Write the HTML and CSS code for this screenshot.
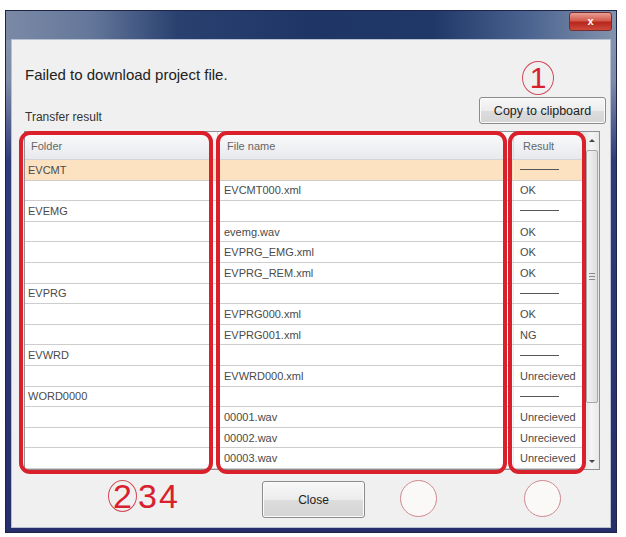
FILE: index.html
```html
<!DOCTYPE html>
<html lang="en">
<head>
    <meta charset="UTF-8">
    <title>Transfer result</title>
    <link rel="stylesheet" href="styles.css">
</head>
<body>
    <div class="window">
        <div class="titlebar">
            <span class="close-btn">x</span>
        </div>
        <div class="client">
            <div class="top">
                <div class="top-left">
                    <p class="message">Failed to download project file.</p>
                    <p class="caption">Transfer result</p>
                </div>
                <button class="btn btn-copy">Copy to clipboard</button>
            </div>

            <div class="grid">
                <div class="grid-main">
                    <div class="row head">
                        <div class="cell">Folder</div>
                        <div class="cell">File name</div>
                        <div class="cell">Result</div>
                    </div>
                    <div class="row selected">
                        <div class="cell">EVCMT</div><div class="cell"></div><div class="cell"><span class="dash"></span></div>
                    </div>
                    <div class="row">
                        <div class="cell"></div><div class="cell">EVCMT000.xml</div><div class="cell">OK</div>
                    </div>
                    <div class="row">
                        <div class="cell">EVEMG</div><div class="cell"></div><div class="cell"><span class="dash"></span></div>
                    </div>
                    <div class="row">
                        <div class="cell"></div><div class="cell">evemg.wav</div><div class="cell">OK</div>
                    </div>
                    <div class="row">
                        <div class="cell"></div><div class="cell">EVPRG_EMG.xml</div><div class="cell">OK</div>
                    </div>
                    <div class="row">
                        <div class="cell"></div><div class="cell">EVPRG_REM.xml</div><div class="cell">OK</div>
                    </div>
                    <div class="row">
                        <div class="cell">EVPRG</div><div class="cell"></div><div class="cell"><span class="dash"></span></div>
                    </div>
                    <div class="row">
                        <div class="cell"></div><div class="cell">EVPRG000.xml</div><div class="cell">OK</div>
                    </div>
                    <div class="row">
                        <div class="cell"></div><div class="cell">EVPRG001.xml</div><div class="cell">NG</div>
                    </div>
                    <div class="row">
                        <div class="cell">EVWRD</div><div class="cell"></div><div class="cell"><span class="dash"></span></div>
                    </div>
                    <div class="row">
                        <div class="cell"></div><div class="cell">EVWRD000.xml</div><div class="cell">Unrecieved</div>
                    </div>
                    <div class="row">
                        <div class="cell">WORD0000</div><div class="cell"></div><div class="cell"><span class="dash"></span></div>
                    </div>
                    <div class="row">
                        <div class="cell"></div><div class="cell">00001.wav</div><div class="cell">Unrecieved</div>
                    </div>
                    <div class="row">
                        <div class="cell"></div><div class="cell">00002.wav</div><div class="cell">Unrecieved</div>
                    </div>
                    <div class="row">
                        <div class="cell"></div><div class="cell">00003.wav</div><div class="cell">Unrecieved</div>
                    </div>
                </div>
                <div class="scrollbar">
                    <div class="sb-arrow sb-up"></div>
                    <div class="sb-track">
                        <div class="sb-thumb"><span class="grip"></span></div>
                    </div>
                    <div class="sb-arrow sb-down"></div>
                </div>
            </div>

            <div class="bottom">
                <button class="btn btn-close">Close</button>
            </div>

            <!-- red annotations -->
            <div class="mark mark-folder"></div>
            <div class="mark mark-file"></div>
            <div class="mark mark-result"></div>
            <span class="ring ring-1">1</span>
            <span class="ring ring-2">2</span>
            <span class="num num-3">3</span>
            <span class="num num-4">4</span>
            <span class="ring ring-empty ring-a"></span>
            <span class="ring ring-empty ring-b"></span>
        </div>
    </div>
</body>
</html>
```

FILE: styles.css
```css
* {
    margin: 0;
    padding: 0;
    box-sizing: border-box;
}

body {
    font-family: "Liberation Sans", Arial, sans-serif;
    background-color: #fff;
    color: #333;
}

.window {
    width: 612px;
    height: 523px;
    margin: 10px 0 0 5px;
    border: 1px solid #1e2448;
    display: flex;
    flex-direction: column;
    background: linear-gradient(180deg, #8a97b2 0px, #7d8ba8 70px, #2e3b7a 150px, #262f6c 100%);
}

.titlebar {
    height: 29px;
    position: relative;
    background: linear-gradient(90deg, #7b89a6 0%, #64779a 14%, #2a4170 28%, #1e3566 50%, #203868 70%, #4c6490 86%, #8393ad 100%);
}

.close-btn {
    position: absolute;
    right: 4px;
    top: 1px;
    width: 43px;
    height: 19px;
    border: 1px solid #7a2a2a;
    border-radius: 3px;
    background: linear-gradient(180deg, #e8a096 0%, #d4594c 45%, #b8271c 55%, #cc4a3c 100%);
    color: #fff;
    font-size: 11px;
    font-weight: bold;
    text-align: center;
    line-height: 16px;
}

.client {
    flex: 1;
    margin: 0 6px 5px 6px;
    background-color: #f0f0f0;
    box-shadow: 0 0 0 1px #b8c0d2;
    position: relative;
    display: flex;
    flex-direction: column;
}

.top {
    height: 91px;
    display: flex;
    justify-content: space-between;
    align-items: flex-end;
    padding: 0 4px 7px 13px;
}

.message {
    font-size: 15px;
    line-height: 18px;
    color: #222;
    margin-bottom: 26px;
}

.caption {
    font-size: 12px;
    line-height: 14px;
    color: #333;
}

.btn {
    font-family: "Liberation Sans", Arial, sans-serif;
    color: #222;
    border: 1px solid #8c8c8c;
    border-radius: 3px;
    background: linear-gradient(180deg, #f8f8f8 0%, #ececec 50%, #dddddd 51%, #d4d4d4 100%);
    box-shadow: inset 0 0 0 1px #fbfbfb;
}

.btn-copy {
    width: 127px;
    height: 27px;
    font-size: 12.5px;
}

.grid {
    height: 339px;
    margin: 0 10px 0 12px;
    border: 1px solid #8e9094;
    background-color: #fff;
    display: flex;
}

.grid-main {
    flex: 1;
}

.row {
    display: grid;
    grid-template-columns: 193px 296px 1fr;
    height: 20.6px;
    border-bottom: 1px solid #cdcdcd;
    font-size: 11px;
    color: #4a4a4a;
}

.row .cell {
    display: flex;
    align-items: center;
    padding-left: 6px;
    border-right: 1px solid #ececec;
    white-space: nowrap;
    overflow: hidden;
}

.row .cell:first-child {
    padding-left: 3px;
}

.row.head {
    height: 28px;
    background: linear-gradient(180deg, #fbfbfc 0%, #f1f2f4 50%, #e7e9ec 100%);
    border-bottom: 1px solid #d5d5d5;
    color: #666;
}

.row.head .cell {
    padding-left: 9px;
    border-right: 1px solid #dadada;
}

.row.head .cell:first-child {
    padding-left: 6px;
}

.row.selected {
    background-color: #fde2c2;
}

.dash {
    display: inline-block;
    width: 39px;
    border-top: 1px solid #555;
}

.scrollbar {
    width: 16px;
    display: flex;
    flex-direction: column;
    background: linear-gradient(90deg, #e4e4e4, #f4f4f4 50%, #e8e8e8);
    border-left: 1px solid #e0e0e0;
}

.sb-arrow {
    height: 17px;
    position: relative;
}

.sb-arrow::after {
    content: '';
    position: absolute;
    left: 5px;
    border-left: 3px solid transparent;
    border-right: 3px solid transparent;
}

.sb-up::after {
    top: 7px;
    border-bottom: 3px solid #444;
}

.sb-down::after {
    top: 8px;
    border-top: 3px solid #444;
}

.sb-track {
    flex: 1;
    padding: 1px 1px 0 2px;
}

.sb-thumb {
    height: 253px;
    border: 1px solid #a6a6a6;
    border-radius: 2px;
    background: linear-gradient(90deg, #f2f2f2, #dedede);
    display: flex;
    align-items: center;
    justify-content: center;
}

.grip {
    width: 6px;
    height: 7px;
    border-top: 1px solid #888;
    border-bottom: 1px solid #888;
    position: relative;
}

.grip::after {
    content: '';
    position: absolute;
    left: 0;
    right: 0;
    top: 2px;
    border-top: 1px solid #888;
}

.bottom {
    flex: 1;
    display: flex;
    justify-content: center;
    padding-top: 11px;
}

.btn-close {
    width: 103px;
    height: 37px;
    font-size: 12px;
    margin-left: 5px;
}

/* annotations */
.mark {
    position: absolute;
    top: 91px;
    height: 343px;
    border: 4px solid #d9202b;
    border-radius: 11px;
}

.mark-folder {
    left: 7px;
    width: 194px;
}

.mark-file {
    left: 204px;
    width: 291px;
}

.mark-result {
    left: 496px;
    width: 78px;
}

.ring {
    position: absolute;
    border: 1.5px solid #cf4a58;
    border-radius: 50%;
    color: #d8202e;
    font-size: 30px;
    display: flex;
    align-items: center;
    justify-content: center;
}

.ring-1 {
    left: 510px;
    top: 21px;
    width: 32px;
    height: 34px;
}

.ring-2 {
    left: 96px;
    top: 440px;
    width: 29px;
    height: 32px;
    font-size: 34px;
}

.num {
    position: absolute;
    top: 440px;
    height: 32px;
    line-height: 32px;
    color: #d8202e;
    font-size: 34px;
}

.num-3 {
    left: 126px;
}

.num-4 {
    left: 147px;
}

.ring-empty {
    top: 440px;
    width: 37px;
    height: 37px;
    border-color: #cf8a90;
    background-color: #fbf8f8;
}

.ring-a {
    left: 388px;
}

.ring-b {
    left: 512px;
}
```
